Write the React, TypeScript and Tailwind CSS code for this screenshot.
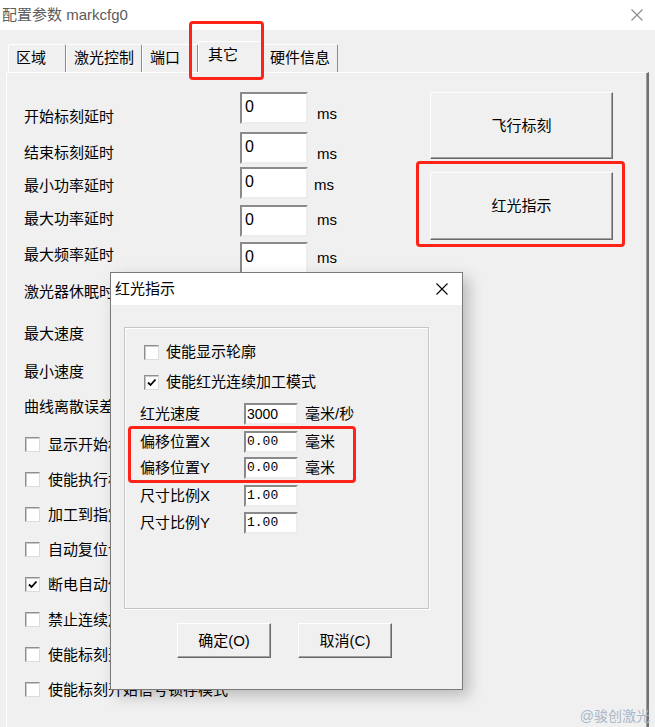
import type { ReactNode } from 'react';

// Classic Win32 property sheet "配置参数" with the "其它" page open and the
// modal "红光指示" dialog on top of it.

const UI_FONT = "font-['Liberation_Sans','Noto_Sans_CJK_SC',sans-serif]";

interface DelayRow {
  label: string;
  row: string;
  labelTop: string;
  unitTop: string;
  unitGap: string;
}

const delayRows: DelayRow[] = [
  { label: '开始标刻延时', row: 'h-[40px]', labelTop: 'mt-[15px]', unitTop: 'mt-[12px]', unitGap: 'ml-[9px]' },
  { label: '结束标刻延时', row: 'h-[35px]', labelTop: 'mt-[11px]', unitTop: 'mt-[12px]', unitGap: 'ml-[9px]' },
  { label: '最小功率延时', row: 'h-[38px]', labelTop: 'mt-[9px]', unitTop: 'mt-[8px]', unitGap: 'ml-[6px]' },
  { label: '最大功率延时', row: 'h-[37px]', labelTop: 'mt-[4px]', unitTop: 'mt-[5px]', unitGap: 'ml-[9px]' },
  { label: '最大频率延时', row: 'h-[31px]', labelTop: 'mt-[3px]', unitTop: 'mt-[6px]', unitGap: 'ml-[9px]' },
];

// rows under the dialog only show their first few characters
const plainRows = [
  { label: '激光器休眠时', row: 'h-[38px]' },
  { label: '最大速度', row: 'h-[46px]' },
  { label: '最小速度', row: 'h-[30px]' },
  { label: '曲线离散误差', row: 'h-[40px]' },
];

const optionRows = [
  { label: '显示开始标', checked: false },
  { label: '使能执行标', checked: false },
  { label: '加工到指定', checked: false },
  { label: '自动复位计', checked: false },
  { label: '断电自动保', checked: true },
  { label: '禁止连续加', checked: false },
  { label: '使能标刻开', checked: false },
  { label: '使能标刻开始信号锁存模式', checked: false },
];

const tabs = [
  { label: '区域', width: 'w-[58px]' },
  { label: '激光控制', width: 'w-[76px]' },
  { label: '端口', width: 'w-[56px]' },
  { label: '其它', width: 'w-[64px]', active: true },
  { label: '硬件信息', width: 'w-[76px]' },
];

function CloseIcon({ className }: { className?: string }) {
  return (
    <svg viewBox="0 0 12 12" className={className} fill="none" stroke="currentColor" strokeWidth="1.1">
      <path d="M0.5 0.5 L11.5 11.5 M11.5 0.5 L0.5 11.5" />
    </svg>
  );
}

function CheckBox({ checked }: { checked?: boolean }) {
  return (
    <span className="flex h-[15px] w-[15px] shrink-0 items-center justify-center border border-b-[#dcdcdc] border-l-[#8f8f8f] border-r-[#dcdcdc] border-t-[#8f8f8f] bg-white shadow-[inset_1px_1px_0_#c9c9c9]">
      {checked && (
        <svg viewBox="0 0 11 11" className="h-[11px] w-[11px]" fill="none" stroke="#000" strokeWidth="1.8">
          <path d="M2 5.5 L4.5 8 L9.5 2.5" />
        </svg>
      )}
    </span>
  );
}

function RaisedButton({ className, children }: { className: string; children: ReactNode }) {
  return (
    <div
      className={`flex items-center justify-center border border-b-[#696969] border-l-white border-r-[#696969] border-t-white bg-[#f0f0f0] text-[15px] leading-[20px] shadow-[inset_-1px_-1px_0_#a0a0a0] ${className}`}
    >
      {children}
    </div>
  );
}

function SunkenField({ className, children }: { className: string; children: ReactNode }) {
  return (
    <div
      className={`border-2 border-b-[#ececec] border-l-[#8a8a8a] border-r-[#ececec] border-t-[#8a8a8a] bg-white ${className}`}
    >
      {children}
    </div>
  );
}

function TitleBar() {
  return (
    <div className="flex h-[30px] shrink-0 items-center justify-between bg-white pl-[2px] pr-[12px]">
      <span className="text-[15px] leading-[20px] text-[#5c5c5c]">配置参数 markcfg0</span>
      <CloseIcon className="h-[12px] w-[12px] text-[#8a8a8a]" />
    </div>
  );
}

function TabStrip() {
  return (
    <div className="flex h-[42px] shrink-0 items-end pl-[8px]">
      {tabs.map((tab) =>
        tab.active ? (
          <div
            key={tab.label}
            className={`relative z-10 -mb-px h-[32px] rounded-t-[2px] border-l border-r border-t border-l-white border-r-[#8a8a8a] border-t-white bg-[#f0f0f0] pl-[9px] pt-[3px] text-[15px] leading-[20px] ${tab.width}`}
          >
            {tab.label}
          </div>
        ) : (
          <div
            key={tab.label}
            className={`h-[28px] rounded-t-[2px] border-l border-r border-t border-l-white border-r-[#8a8a8a] border-t-white pl-[7px] pt-[3px] text-[15px] leading-[20px] ${tab.width}`}
          >
            {tab.label}
          </div>
        ),
      )}
    </div>
  );
}

function OtherPage() {
  return (
    <div className="ml-[6px] flex w-[643px] flex-1 border-l border-r-2 border-t border-l-white border-r-[#707070] border-t-white shadow-[inset_-1px_0_0_#a0a0a0]">
      <div className="flex w-[423px] flex-col pl-[17px] pt-[19px]">
        {delayRows.map((r) => (
          <div key={r.label} className={`flex items-start ${r.row}`}>
            <span className={`w-[216px] text-[15px] leading-[20px] ${r.labelTop}`}>{r.label}</span>
            <SunkenField className="h-[32px] w-[68px] pl-[3px] pt-[3px] text-[16px] leading-[20px]">0</SunkenField>
            <span className={`text-[15px] leading-[20px] ${r.unitTop} ${r.unitGap}`}>ms</span>
          </div>
        ))}
        {plainRows.map((r) => (
          <div key={r.label} className={`flex items-center text-[15px] leading-[20px] ${r.row}`}>
            {r.label}
          </div>
        ))}
        {optionRows.map((r) => (
          <div key={r.label} className="flex h-[35px] items-center pl-px">
            <CheckBox checked={r.checked} />
            <span className="ml-[8px] text-[15px] leading-[20px]">{r.label}</span>
          </div>
        ))}
      </div>
      <div className="flex w-[183px] flex-col gap-[13px] pt-[19px]">
        <RaisedButton className="h-[67px]">飞行标刻</RaisedButton>
        <RaisedButton className="h-[68px]">红光指示</RaisedButton>
      </div>
    </div>
  );
}

interface DialogField {
  label: string;
  value: string;
  valueFont: string;
  unit?: string;
  gap: string;
}

const dialogFields: DialogField[] = [
  { label: '红光速度', value: '3000', valueFont: "font-['Liberation_Sans'] text-[14px]", unit: '毫米/秒', gap: 'mt-[11px]' },
  { label: '偏移位置X', value: '0.00', valueFont: "font-['Liberation_Mono'] text-[13px]", unit: '毫米', gap: 'mt-[6px]' },
  { label: '偏移位置Y', value: '0.00', valueFont: "font-['Liberation_Mono'] text-[13px]", unit: '毫米', gap: 'mt-[4px]' },
  { label: '尺寸比例X', value: '1.00', valueFont: "font-['Liberation_Mono'] text-[13px]", gap: 'mt-[6px]' },
  { label: '尺寸比例Y', value: '1.00', valueFont: "font-['Liberation_Mono'] text-[13px]", gap: 'mt-[5px]' },
];

function RedLightDialog() {
  return (
    <div className="absolute left-[110px] top-[272px] z-20 flex h-[418px] w-[353px] flex-col border border-[#7a7a7a] bg-[#f0f0f0] shadow-[6px_6px_14px_rgba(0,0,0,0.22)]">
      <div className="flex h-[32px] shrink-0 items-center justify-between bg-white pl-[4px] pr-[14px]">
        <span className="text-[15px] leading-[20px]">红光指示</span>
        <CloseIcon className="h-[12px] w-[12px] text-black" />
      </div>
      <div className="pl-[13px] pt-[22px]">
        <div className="h-[282px] w-[305px] border border-[#c4c4c4] pl-[15px] pt-[14px] shadow-[inset_1px_1px_0_#fff,1px_1px_0_#fff]">
          <div className="flex h-[20px] items-center pl-[4px]">
            <CheckBox />
            <span className="ml-[7px] text-[15px] leading-[20px]">使能显示轮廓</span>
          </div>
          <div className="mt-[10px] flex h-[20px] items-center pl-[4px]">
            <CheckBox checked />
            <span className="ml-[7px] text-[15px] leading-[20px]">使能红光连续加工模式</span>
          </div>
          {dialogFields.map((f) => (
            <div key={f.label} className={`flex h-[22px] items-center ${f.gap}`}>
              <span className="w-[104px] text-[15px] leading-[20px]">{f.label}</span>
              <SunkenField className={`h-[22px] w-[54px] pl-px leading-[18px] ${f.valueFont}`}>{f.value}</SunkenField>
              {f.unit && <span className="ml-[7px] text-[15px] leading-[20px]">{f.unit}</span>}
            </div>
          ))}
        </div>
        <div className="mt-[14px] flex gap-[27px] pl-[53px]">
          <RaisedButton className="h-[35px] w-[94px] border-b-[#4a4a4a] border-r-[#4a4a4a]">确定(O)</RaisedButton>
          <RaisedButton className="h-[35px] w-[94px]">取消(C)</RaisedButton>
        </div>
      </div>
    </div>
  );
}

export default function App() {
  return (
    <div className={`relative flex h-[727px] w-[655px] flex-col overflow-hidden bg-[#f0f0f0] text-black ${UI_FONT}`}>
      <TitleBar />
      <TabStrip />
      <OtherPage />
      <RedLightDialog />

      {/* red callout frames */}
      <div className="absolute left-[189px] top-[21px] z-30 h-[59px] w-[75px] rounded-[4px] border-[3px] border-[#ff2219]" />
      <div className="absolute left-[416px] top-[161px] z-30 h-[86px] w-[209px] rounded-[4px] border-[3px] border-[#ff2219]" />
      <div className="absolute left-[128px] top-[426px] z-30 h-[57px] w-[228px] rounded-[4px] border-[3px] border-[#ff2219]" />

      <span className="absolute bottom-[2px] right-[5px] z-30 text-[14px] leading-[18px] text-[#a9b7c9]">@骏创激光</span>
    </div>
  );
}
